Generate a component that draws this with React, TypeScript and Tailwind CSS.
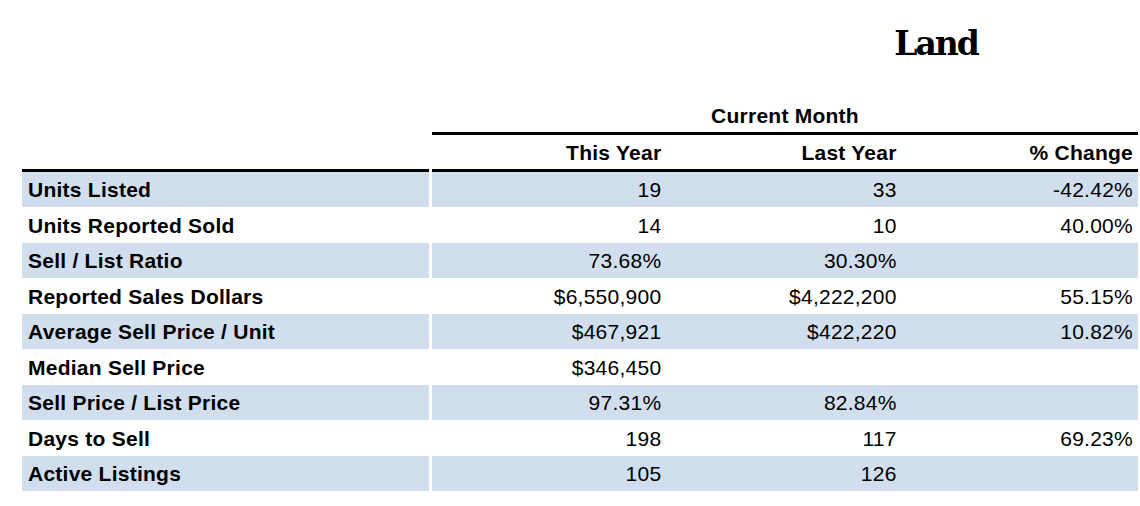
import React from "react"

type Row = {
  label: string
  thisYear: string
  lastYear: string
  change: string
}

const rows: Row[] = [
  { label: "Units Listed", thisYear: "19", lastYear: "33", change: "-42.42%" },
  { label: "Units Reported Sold", thisYear: "14", lastYear: "10", change: "40.00%" },
  { label: "Sell / List Ratio", thisYear: "73.68%", lastYear: "30.30%", change: "" },
  { label: "Reported Sales Dollars", thisYear: "$6,550,900", lastYear: "$4,222,200", change: "55.15%" },
  { label: "Average Sell Price / Unit", thisYear: "$467,921", lastYear: "$422,220", change: "10.82%" },
  { label: "Median Sell Price", thisYear: "$346,450", lastYear: "", change: "" },
  { label: "Sell Price / List Price", thisYear: "97.31%", lastYear: "82.84%", change: "" },
  { label: "Days to Sell", thisYear: "198", lastYear: "117", change: "69.23%" },
  { label: "Active Listings", thisYear: "105", lastYear: "126", change: "" },
]

export default function App() {
  return (
    <div className="w-[1140px] h-[506px] bg-white pl-[22px] text-black font-['Liberation_Sans',Arial,sans-serif] text-[21px] leading-none tracking-[0.25px] overflow-hidden">
      {/* title */}
      <div className="h-[98px] flex justify-end pr-[2px]">
        <div className="w-[404px] pt-[27px] text-center font-['DejaVu_Serif',serif] font-bold text-[33px] leading-[33px] tracking-[-2px]">
          Land
        </div>
      </div>

      {/* group header */}
      <div className="flex">
        <div className="w-[407px]" />
        <div className="w-[3px]" />
        <div className="w-[706px] h-[37px] border-b-[3px] border-black flex items-center justify-center font-bold">
          Current Month
        </div>
      </div>

      {/* column headers */}
      <div className="flex">
        <div className="w-[407px] h-[37px] border-b-[3px] border-black" />
        <div className="w-[3px]" />
        <div className="w-[706px] h-[37px] border-b-[3px] border-black grid grid-cols-3 font-bold">
          <div className="flex items-center justify-end pr-[6px]">This Year</div>
          <div className="flex items-center justify-end pr-[6px]">Last Year</div>
          <div className="flex items-center justify-end pr-[5px]">% Change</div>
        </div>
      </div>

      {rows.map((r, i) => {
        const shaded = i % 2 === 0
        const bg = shaded ? "bg-[#d0deee]" : "bg-white"
        const h = shaded ? "h-[35px]" : "h-[36px]"
        return (
          <div key={r.label} className={`flex ${h}`}>
            <div className={`w-[407px] ${bg} flex items-center pl-[6px] font-bold`}>{r.label}</div>
            <div className="w-[3px]" />
            <div className={`w-[706px] ${bg} grid grid-cols-3`}>
              <div className="flex items-center justify-end pr-[6px]">{r.thisYear}</div>
              <div className="flex items-center justify-end pr-[6px]">{r.lastYear}</div>
              <div className="flex items-center justify-end pr-[5px]">{r.change}</div>
            </div>
          </div>
        )
      })}
    </div>
  )
}
